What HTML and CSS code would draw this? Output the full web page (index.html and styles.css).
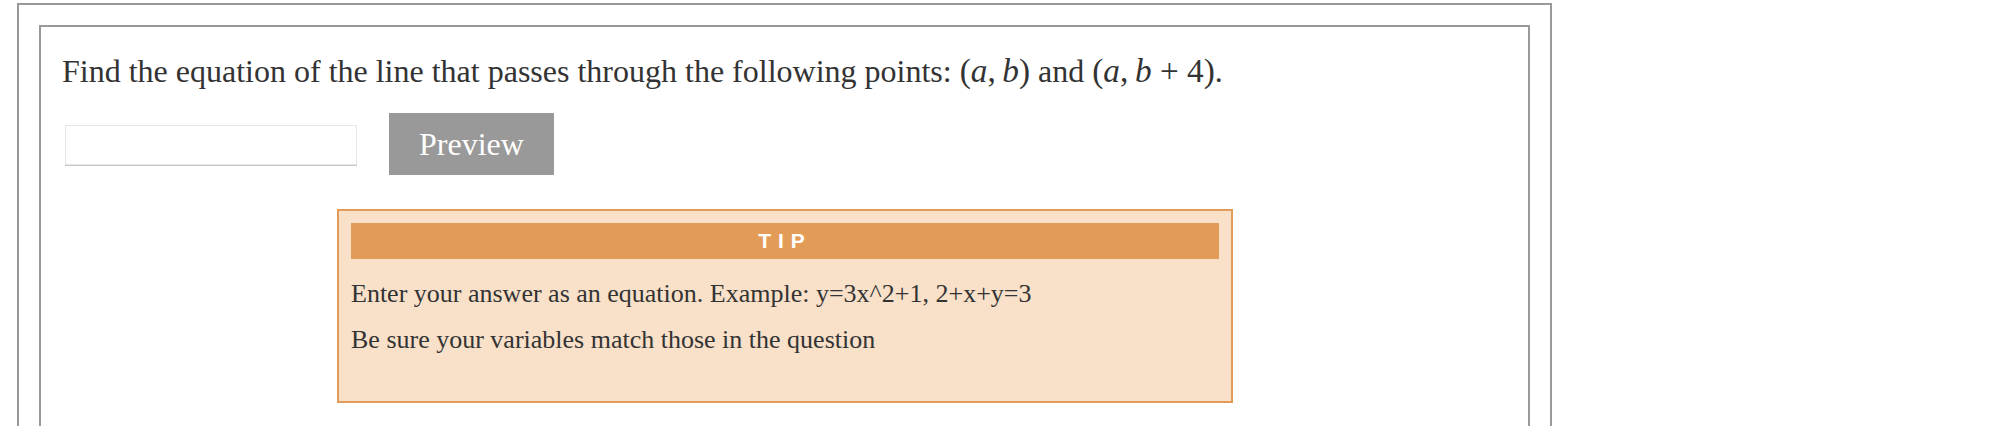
FILE: index.html
```html
<!DOCTYPE html>
<html lang="en">
<head>
  <meta charset="UTF-8">
  <title>Question</title>
  <link rel="stylesheet" href="styles.css">
</head>
<body>
  <div class="frame">
    <div class="question">
      <p class="prompt">Find the equation of the line that passes through the following points: <span class="math">(<i>a</i>,&#8201;<i>b</i>)</span> and <span class="math">(<i>a</i>,&#8201;<i>b</i>&#8197;+&#8197;4)</span>.</p>

      <div class="answer-row">
        <input type="text" class="answer-input">
        <button class="preview-btn">Preview</button>
      </div>

      <div class="tip">
        <div class="tip-head">TIP</div>
        <p>Enter your answer as an equation. Example: y=3x^2+1, 2+x+y=3</p>
        <p>Be sure your variables match those in the question</p>
      </div>
    </div>
  </div>
</body>
</html>
```

FILE: styles.css
```css
:root {
  --frame-border: #999999;
  --text-color: #333333;
  --tip-border: #e39c57;
  --tip-bg: #f8e0c9;
}

html, body {
  margin: 0;
  padding: 0;
  overflow: hidden;
  background: #ffffff;
  color: var(--text-color);
  font-family: "Liberation Serif", "Times New Roman", serif;
}

body {
  padding: 3px 17px;
}

.frame {
  width: 1535px;
  box-sizing: border-box;
  border: 2px solid var(--frame-border);
  padding: 20px 20px 0;
}

.question {
  border: 2px solid var(--frame-border);
  padding: 25px 20px 60px 21px;
}

.prompt {
  margin: 0;
  font-size: 32px;
  line-height: 38px;
}

.math {
  white-space: nowrap;
  font-size: 1.04em;
  line-height: 1;
}

.math i {
  font-style: italic;
}

.answer-row {
  display: flex;
  align-items: center;
  gap: 32px;
  margin: 23px 0 0 3px;
}

.answer-input {
  width: 292px;
  height: 40px;
  box-sizing: border-box;
  border: 1px solid #e6e6e6;
  box-shadow: 0 1px 0 #c8c8c8;
  outline: none;
  margin: 2px 0 0;
  padding: 0 8px;
  font-size: 20px;
}

.preview-btn {
  width: 165px;
  height: 62px;
  border: none;
  background: #999999;
  color: #ffffff;
  font-family: "Liberation Serif", "Times New Roman", serif;
  font-size: 32px;
  padding: 0;
}

.tip {
  width: 896px;
  box-sizing: border-box;
  margin: 34px auto 0;
  border: 2px solid var(--tip-border);
  background: var(--tip-bg);
  padding: 12px 12px 30px;
}

.tip-head {
  height: 36px;
  line-height: 36px;
  background: var(--tip-border);
  color: #ffffff;
  text-align: center;
  font-family: "Liberation Sans", Arial, sans-serif;
  font-weight: bold;
  font-size: 21px;
  letter-spacing: 7px;
  margin-bottom: 20px;
}

.tip p {
  margin: 0 0 16px;
  font-size: 26px;
  line-height: 30px;
}
```
